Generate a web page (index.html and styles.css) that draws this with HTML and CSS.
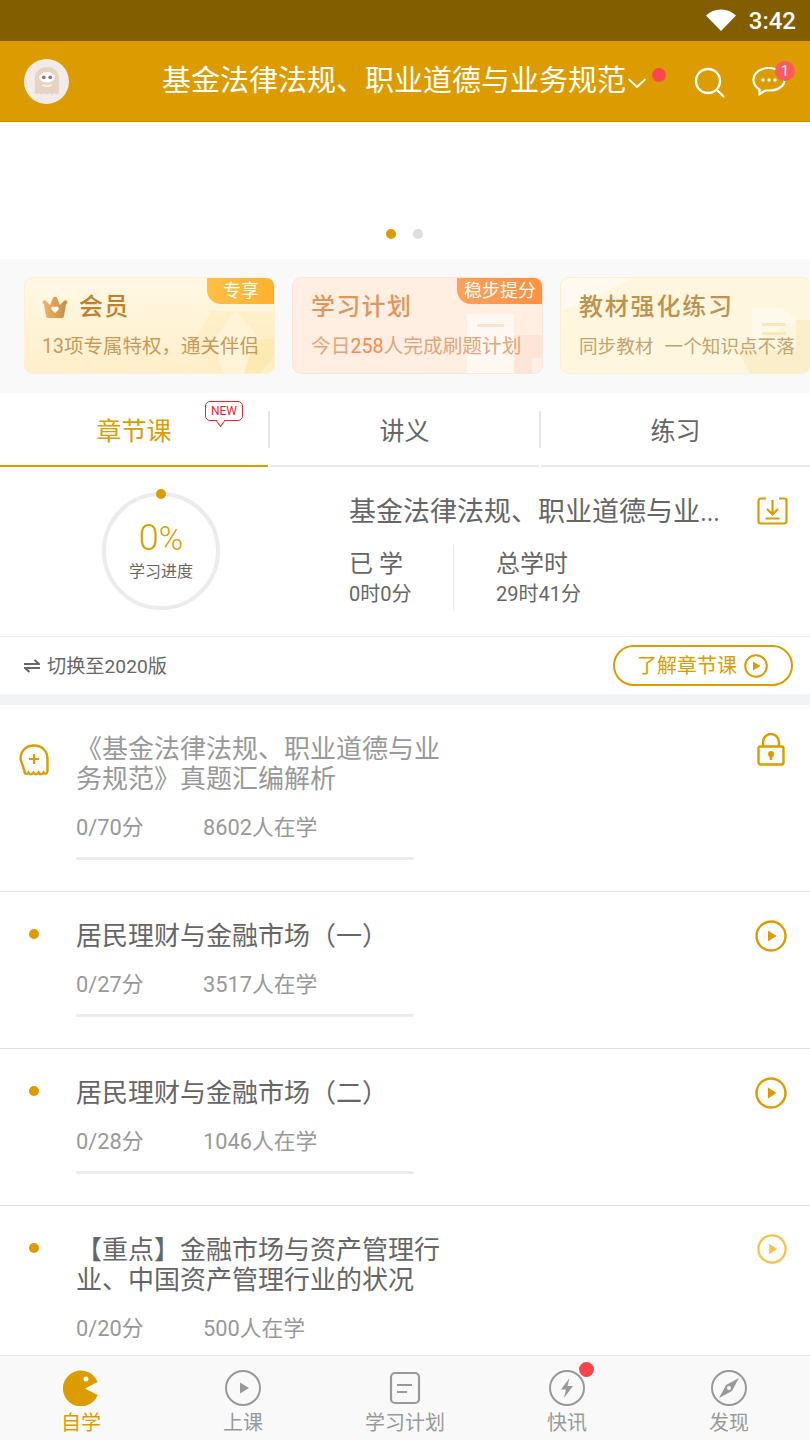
FILE: index.html
```html
<!DOCTYPE html>
<html lang="zh-CN">
<head>
<meta charset="utf-8">
<title>学习</title>
<link rel="stylesheet" href="styles.css">
</head>
<body>
<div class="app">
  <div class="statusbar">
    <svg class="wifi" width="32" height="24" viewBox="0 0 32 24"><path d="M1 7.500C5 3.600 10 1.500 16 1.500S27 3.600 31 7.500L16 23Z" fill="#fff"/></svg>
    <span class="clock">3:42</span>
  </div>
  <header class="topbar">
    <div class="avatar">
      <svg width="26" height="30" viewBox="0 0 28 32"><path d="M1 14C1 6 6 1 14 1s13 5 13 13v15c-2 2-4 2-5 0-2 2-4 2-5 0-2 2-4 2-6 0-2 2-4 2-5 0-2 2-3 1-5 0Z" fill="#e6d3c3"/><ellipse cx="14" cy="12" rx="8.500" ry="5.500" fill="#fff"/><circle cx="10.500" cy="12" r="2" fill="#8d7a6c"/><circle cx="17.500" cy="12" r="2" fill="#8d7a6c"/><path d="M9 20c3 2 7 2 10 0" stroke="#fff" stroke-width="1.500" fill="none"/></svg>
    </div>
    <div class="course-title">基金法律法规、职业道德与业务规范</div>
    <svg class="chev" width="20" height="12" viewBox="0 0 20 12"><path d="M1.500 2 10 10l8.500-8" stroke="#fff" stroke-width="1.800" fill="none"/></svg>
    <span class="reddot"></span>
    <svg class="search" width="32" height="32" viewBox="0 0 32 32"><circle cx="14" cy="14" r="12" stroke="#fff" stroke-width="2.400" fill="none"/><path d="m23 23 7 7" stroke="#fff" stroke-width="2.400"/></svg>
    <div class="chat">
      <svg width="34" height="30" viewBox="0 0 34 30"><path d="M17 2C8 2 1.500 7 1.500 14c0 4 2 7 6 9.500V28l6-3.500h3.500c9 0 15.500-4.500 15.500-10.500S26 2 17 2Z" stroke="#fff" stroke-width="2.200" fill="none"/><circle cx="11" cy="14" r="1.700" fill="#fff"/><circle cx="17" cy="14" r="1.700" fill="#fff"/><circle cx="23" cy="14" r="1.700" fill="#fff"/></svg>
      <span class="chat-badge">1</span>
    </div>
  </header>
  <section class="banner">
    <span class="bdot on"></span><span class="bdot"></span>
  </section>
  <section class="promos">
    <div class="promo p-vip">
      <svg class="deco" width="80" height="62" viewBox="0 0 80 62"><path d="M17 0H80V62H20L0 32Z" fill="#ffeec5" opacity=".8"/><path d="M42 0 68 30 50 62H30L18 30Z" fill="#fff4d8"/><path d="M60 28H80V45L66 62H50Z" fill="#fde7ad" opacity=".8"/></svg>
      <div class="promo-head">
        <svg class="crown" width="26" height="24" viewBox="0 0 26 24"><defs><linearGradient id="cg" x1="0" y1="0" x2="1" y2="0"><stop offset="0" stop-color="#eab66f"/><stop offset="1" stop-color="#c98a3c"/></linearGradient></defs><path d="M1 6a2.500 2.500 0 0 1 4 1l3 3 3-7a2.200 2.200 0 0 1 4 0l3 7 3-3a2.500 2.500 0 0 1 4-1c1 1 0 3-1 3l-2 12q-.3 2-2 2H6q-2 0-2-2L2 9C1 9 0 7 1 6Z" fill="url(#cg)"/><path d="M13 18l-3.500-3.500a2 2 0 0 1 3.500-2 2 2 0 0 1 3.500 2Z" fill="#fff"/></svg>
        <span class="promo-title t-vip">会员</span>
      </div>
      <div class="promo-sub s-vip">13项专属特权，通关伴侣</div>
      <span class="tag tag-vip">专享</span>
    </div>
    <div class="promo p-plan">
      <svg class="deco" width="75" height="59" viewBox="0 0 75 59"><rect x="0" y="0" width="47" height="59" fill="#fff" opacity=".55"/><rect x="10" y="10" width="27" height="3" fill="#fbe3d2"/><rect x="47" y="21" width="28" height="38" fill="#ffdccb" opacity=".5"/><rect x="65" y="44" width="10" height="15" fill="#fff" opacity=".4"/></svg>
      <div class="promo-head"><span class="promo-title t-plan">学习计划</span></div>
      <div class="promo-sub s-plan">今日<em>258</em>人完成刷题计划</div>
      <span class="tag tag-plan">稳步提分</span>
    </div>
    <div class="promo p-book">
      <svg class="deco" width="90" height="68" viewBox="0 0 90 68"><path d="M30 68 17 45 76 15H90V68Z" fill="#fbeecb"/><path d="M32 3H62L76 15V45H32Z" fill="#fff" opacity=".4"/><rect x="42" y="18" width="24" height="3" fill="#fbe7b8"/><rect x="42" y="27" width="24" height="3" fill="#fbe7b8"/></svg>
      <div class="promo-head"><span class="promo-title t-book">教材强化练习</span></div>
      <div class="promo-sub s-book">同步教材&nbsp;&nbsp;一个知识点不落</div>
    </div>
  </section>
  <nav class="tabs">
    <div class="tab active">章节课
      <span class="new">NEW<i></i></span>
    </div>
    <div class="tab">讲义</div>
    <div class="tab">练习</div>
  </nav>
  <section class="overview">
    <div class="ring">
      <span class="ring-dot"></span>
      <div class="ring-pct">0<small>%</small></div>
      <div class="ring-label">学习进度</div>
    </div>
    <div class="ov-info">
      <div class="ov-title">基金法律法规、职业道德与业<span class="dots">...</span></div>
      <div class="ov-stats">
        <div class="stat first"><div class="stat-k">已 学</div><div class="stat-v">0时0分</div></div>
        <div class="stat"><div class="stat-k">总学时</div><div class="stat-v">29时41分</div></div>
      </div>
    </div>
    <svg class="download" width="31" height="28" viewBox="0 0 31 28"><path d="M9 1.500H4Q1.500 1.500 1.500 4v20q0 2.500 2.500 2.500h23q2.500 0 2.500-2.500V4q0-2.500-2.500-2.500h-5" stroke="#dc9c00" stroke-width="2.200" fill="none"/><path d="M15.500 3v14M10 12l5.500 5.500L21 12M8.500 21.500h14" stroke="#dc9c00" stroke-width="2.200" fill="none"/></svg>
  </section>
  <section class="switchbar">
    <div class="switch">
      <svg class="swap" width="16" height="14" viewBox="0 0 16 14"><path d="M0 5H15L10.500 1M16 9H1L5.500 13" stroke="#666" stroke-width="2" fill="none"/></svg><span class="switch-text">切换至2020版</span>
    </div>
    <div class="learn"><span class="learn-text">了解章节课</span>
      <svg width="24" height="24" viewBox="0 0 24 24"><circle cx="12" cy="12" r="10.800" stroke="#dc9c00" stroke-width="2" fill="none"/><path d="M9 7.500v9l7.500-4.500Z" fill="#dc9c00"/></svg>
    </div>
  </section>
  <main class="list">
    <article class="item">
      <div class="lead">
        <svg class="ghost" width="30" height="32" viewBox="0 0 30 32"><path d="M1.500 15C1.500 7 7 1.500 15 1.500S28.500 7 28.500 15v12c0 3-2.500 3.500-4 1.500-1.500 2.500-4 2.500-5 0-1.500 2.500-3.500 2.500-5 0-1.500 2.500-3.500 2.500-5 0-1.500 2-4 2-4-1.500Z" stroke="#dc9c00" stroke-width="2.400" fill="none"/><path d="M10 15h10M15 10v10" stroke="#dc9c00" stroke-width="2.200"/></svg>
      </div>
      <div class="body">
        <h3 class="ttl muted">《基金法律法规、职业道德与业务规范》真题汇编解析</h3>
        <div class="meta"><span>0/70分</span><span>8602人在学</span></div>
        <div class="bar"></div>
      </div>
      <svg class="side lock" width="28" height="33" viewBox="0 0 28 33"><path d="M6 13V9a8 8 0 0 1 16 0v4" stroke="#dc9c00" stroke-width="2.400" fill="none"/><rect x="1.500" y="13.500" width="25" height="18" rx="2" stroke="#dc9c00" stroke-width="2.400" fill="none"/><circle cx="14" cy="21" r="3" fill="#dc9c00"/><rect x="12.700" y="21" width="2.600" height="6" fill="#dc9c00"/></svg>
    </article>
    <article class="item">
      <div class="lead"><span class="dot"></span></div>
      <div class="body">
        <h3 class="ttl">居民理财与金融市场（一）</h3>
        <div class="meta"><span>0/27分</span><span>3517人在学</span></div>
        <div class="bar"></div>
      </div>
      <svg class="side play" width="32" height="32" viewBox="0 0 32 32"><circle cx="16" cy="16" r="14.500" stroke="#dc9c00" stroke-width="2.400" fill="none"/><path d="M13 10.500v11l8.500-5.500Z" fill="#dc9c00"/></svg>
    </article>
    <article class="item">
      <div class="lead"><span class="dot"></span></div>
      <div class="body">
        <h3 class="ttl">居民理财与金融市场（二）</h3>
        <div class="meta"><span>0/28分</span><span>1046人在学</span></div>
        <div class="bar"></div>
      </div>
      <svg class="side play" width="32" height="32" viewBox="0 0 32 32"><circle cx="16" cy="16" r="14.500" stroke="#dc9c00" stroke-width="2.400" fill="none"/><path d="M13 10.500v11l8.500-5.500Z" fill="#dc9c00"/></svg>
    </article>
    <article class="item">
      <div class="lead"><span class="dot"></span></div>
      <div class="body">
        <h3 class="ttl">【重点】金融市场与资产管理行业、中国资产管理行业的状况</h3>
        <div class="meta"><span>0/20分</span><span>500人在学</span></div>
        <div class="bar"></div>
      </div>
      <svg class="side play dim" width="32" height="32" viewBox="0 0 32 32"><circle cx="16" cy="16" r="14.500" stroke="#f5a800" stroke-width="2.400" fill="none"/><path d="M13 10.500v11l8.500-5.500Z" fill="#f5a800"/></svg>
    </article>
  </main>
  <footer class="bottomnav">
    <div class="nav on">
      <svg width="36" height="36" viewBox="0 0 36 36"><path d="M34.700 12A18 18 0 1 0 34.700 25L22 18.500Z" fill="#dc9c00"/><circle cx="23" cy="9" r="2.500" fill="#fff"/></svg>
      <span>自学</span>
    </div>
    <div class="nav">
      <svg width="36" height="36" viewBox="0 0 36 36"><circle cx="18" cy="18" r="17" stroke="#999" stroke-width="2" fill="none"/><path d="M15 12.500v11l9-5.500Z" fill="#999"/></svg>
      <span>上课</span>
    </div>
    <div class="nav">
      <svg width="36" height="36" viewBox="0 0 36 36"><rect x="4" y="3" width="28" height="30" rx="4" stroke="#999" stroke-width="2.200" fill="none"/><path d="M10 15h15M10 22h10" stroke="#999" stroke-width="2.200"/></svg>
      <span>学习计划</span>
    </div>
    <div class="nav">
      <svg width="36" height="36" viewBox="0 0 36 36"><circle cx="18" cy="18" r="17" stroke="#999" stroke-width="2" fill="none"/><path d="M20.500 8 12 19.500h5L15 28l9-12h-5.500Z" fill="#999"/></svg>
      <span>快讯</span>
      <i class="nav-dot"></i>
    </div>
    <div class="nav">
      <svg width="36" height="36" viewBox="0 0 36 36"><circle cx="18" cy="18" r="17" stroke="#999" stroke-width="2" fill="none"/><path d="M28 8 15 15 8 28l13-7Z" fill="#999"/><circle cx="18" cy="18" r="2" fill="#f9f9f9"/></svg>
      <span>发现</span>
    </div>
  </footer>
</div>
</body>
</html>
```
FILE: styles.css
```css
* { box-sizing: border-box; margin: 0; padding: 0; }
html, body { width: 810px; height: 1440px; overflow: hidden; background: #fff; }
body { font-family: Roboto, "Noto Sans CJK SC", sans-serif; color: #666; }
.app { width: 810px; height: 1440px; display: flex; flex-direction: column; overflow: hidden; }

.statusbar { height: 41px; background: #825e00; display: flex; align-items: center; justify-content: flex-end; padding-right: 14px; flex: none; }
.wifi { margin-right: 12px; margin-top: -1px; }
.clock { color: #fff; font-size: 24px; font-weight: 500; }

.topbar { height: 81px; flex: none; background: #dc9c00; border-bottom: 1px solid #d29500; display: flex; align-items: center; padding-left: 24px; }
.avatar { width: 45px; height: 45px; border-radius: 50%; background: #f3ebe8; display: flex; align-items: center; justify-content: center; }
.course-title { margin-left: 93px; font-size: 29px; line-height: 40px; color: #fff; white-space: nowrap; width: 464px; }
.chev { margin-left: 1px; margin-top: 3px; }
.reddot { width: 14px; height: 14px; border-radius: 50%; background: #f9474e; margin-left: 5px; margin-top: -12px; flex: none; }
.search { margin-left: 28px; margin-top: 3px; }
.chat { position: relative; margin-left: 26px; width: 34px; height: 30px; }
.chat svg { display: block; }
.chat-badge { position: absolute; top: -5px; left: 23px; width: 20px; height: 20px; border-radius: 50%; background: #fb5a5f; color: #fff; font-size: 15px; line-height: 20px; text-align: center; }

.banner { height: 137px; flex: none; background: #fff; display: flex; justify-content: center; align-items: flex-end; gap: 17px; padding-bottom: 20px; padding-right: 1px; }
.bdot { width: 10px; height: 10px; border-radius: 50%; background: #ddd; }
.bdot.on { background: #dc9c00; }

.promos { height: 134px; flex: none; background: #f9f9f9; display: flex; gap: 17px; padding: 18px 0 19px 24px; overflow: hidden; }
.promo { position: relative; width: 251px; flex: none; height: 97px; border-radius: 9px; overflow: hidden; padding: 0 0 0 17px; border: 1px solid transparent; }
.p-vip { background: linear-gradient(180deg, #fff8e6, #ffefc9); border-color: #fdf0d4; }
.p-plan { background: #ffeee2; border-color: #fde6d6; padding-left: 18px; }
.p-book { background: linear-gradient(155deg, #fffaf0 0 16%, #fff6df 16%); border-color: #fcf0d2; padding-left: 18px; }
.promo-head { display: flex; align-items: center; height: 30px; margin-top: 14px; position: relative; }
.crown { margin-right: 11px; }
.promo-title { font-size: 24px; font-weight: 500; line-height: 30px; letter-spacing: 1.300px; }
.t-vip { color: #bf822b; }
.t-plan { color: #e0965a; }
.t-book { color: #bd914e; letter-spacing: 1.800px; }
.promo-sub { position: relative; margin-top: 11px; font-size: 19.500px; line-height: 28px; white-space: nowrap; }
.s-vip { color: #c79a5c; }
.s-plan { color: #e0a67c; font-size: 19.700px; }
.s-plan em { font-style: normal; color: #f98a50; }
.s-book { color: #c4a36e; font-size: 18.600px; word-spacing: 1px; }
.deco { position: absolute; right: 0; bottom: 0; }
.tag { position: absolute; top: -1px; right: -1px; height: 27px; color: #fff; font-size: 18px; line-height: 27px; border-radius: 0 9px 0 14px; text-align: center; }
.tag-vip { width: 68px; background: linear-gradient(90deg, #ffbf47, #ffb02e); }
.tag-plan { width: 86px; background: linear-gradient(90deg, #ffa15c, #ff9040); }

.tabs { height: 74px; flex: none; display: grid; grid-template-columns: 268px 269px 269px; gap: 2px; background: #fff; }
.tab { position: relative; height: 74px; border-bottom: 2px solid #e9e9e9; font-size: 25px; line-height: 77px; text-align: center; color: #666; }
.tab.active { color: #dc9c00; border-bottom-color: #dc9c00; }
.tab:not(:last-child)::after { content: ""; position: absolute; right: -2px; top: 18px; width: 2px; height: 37px; background: #e6e6e6; }
.new { position: absolute; left: 205px; top: 8px; width: 38px; height: 20px; border: 1px solid #f7222c; border-radius: 5px; color: #f7222c; background: #fff; font-size: 12px; line-height: 18px; text-align: center; }
.new i { position: absolute; left: 11px; bottom: -5px; width: 7px; height: 7px; background: #fff; border-right: 1px solid #f7222c; border-bottom: 1px solid #f7222c; transform: rotate(45deg) skew(8deg, 8deg); }

.overview { height: 170px; flex: none; display: flex; align-items: flex-start; padding-left: 102px; background: #fff; border-bottom: 1px solid #ececec; position: relative; }
.ring { position: relative; width: 118px; height: 118px; margin-top: 25px; flex: none; border: 4px solid #ececec; border-radius: 50%; display: flex; flex-direction: column; align-items: center; }
.ring-dot { position: absolute; top: -7px; left: 50%; margin-left: -5px; width: 10px; height: 10px; border-radius: 50%; background: #dc9c00; }
.ring-pct { margin-top: 22px; font-size: 36px; line-height: 40px; color: #dc9c00; font-weight: 300; }
.ring-pct small { font-size: 33px; }
.ring-label { font-size: 16px; line-height: 24px; margin-top: 1px; }
.ov-info { margin-left: 129px; padding-top: 25px; width: 372px; flex: none; }
.ov-title { font-size: 27px; line-height: 40px; white-space: nowrap; }
.dots { letter-spacing: -.6px; }
.ov-stats { display: flex; margin-top: 13px; height: 66px; }
.stat { padding-top: 3px; }
.stat.first { width: 105px; border-right: 1px solid #ececec; margin-right: 42px; }
.stat-k { font-size: 24px; line-height: 32px; }
.stat-v { font-size: 20px; line-height: 28px; }
.download { position: absolute; left: 757px; top: 30px; }

.switchbar { height: 57px; flex: none; display: flex; align-items: center; justify-content: space-between; padding: 0 17px 0 24px; background: #fff; }
.switch { font-size: 19.200px; display: flex; align-items: center; }
.swap { margin-right: 7px; }
.switch-text { margin-top: -2px; }
.learn { width: 180px; height: 41px; border: 2px solid #dc9c00; border-radius: 21px; color: #dc9c00; font-size: 20px; display: flex; align-items: center; padding-left: 22px; gap: 7px; }
.learn-text { margin-top: -2px; }

.list { flex: 1; min-height: 0; overflow: hidden; background: #fff; border-top: 11px solid #f2f3f5; }
.item { position: relative; display: flex; padding: 29px 0 31px; border-bottom: 1px solid #e2e2e2; }
.lead { width: 76px; flex: none; position: relative; }
.dot { display: block; width: 10px; height: 10px; border-radius: 50%; background: #dc9c00; margin: 8px 0 0 28.500px; }
.ghost { display: block; margin: 10px 0 0 19px; }
.body { width: 366px; }
.ttl { font-size: 26px; font-weight: 400; line-height: 30px; color: #666; }
.ttl.muted { color: #999; }
.meta { display: flex; margin-top: 19px; font-size: 21.800px; line-height: 30px; color: #999; }
.meta span:first-child { width: 127px; }
.bar { width: 338px; height: 3px; margin-top: 14px; background: #ececec; border-radius: 2px; }
.side { position: absolute; display: block; }
.lock { left: 757px; top: 28px; }
.play { left: 755px; top: 28px; }
.play.dim { opacity: .7; left: 757px; width: 30px; height: 30px; }

.bottomnav { height: 85px; flex: none; background: #f9f9f9; border-top: 1px solid #e9e9e9; display: grid; grid-template-columns: repeat(5, 162px); }
.nav { position: relative; display: flex; flex-direction: column; align-items: center; padding-top: 14px; font-size: 20px; line-height: 30px; color: #999; }
.nav svg { display: block; }
.nav span { margin-top: 2px; }
.nav.on { color: #dc9c00; }
.nav-dot { position: absolute; left: 93px; top: 6px; width: 15px; height: 15px; border-radius: 50%; background: #f9444a; }
```
